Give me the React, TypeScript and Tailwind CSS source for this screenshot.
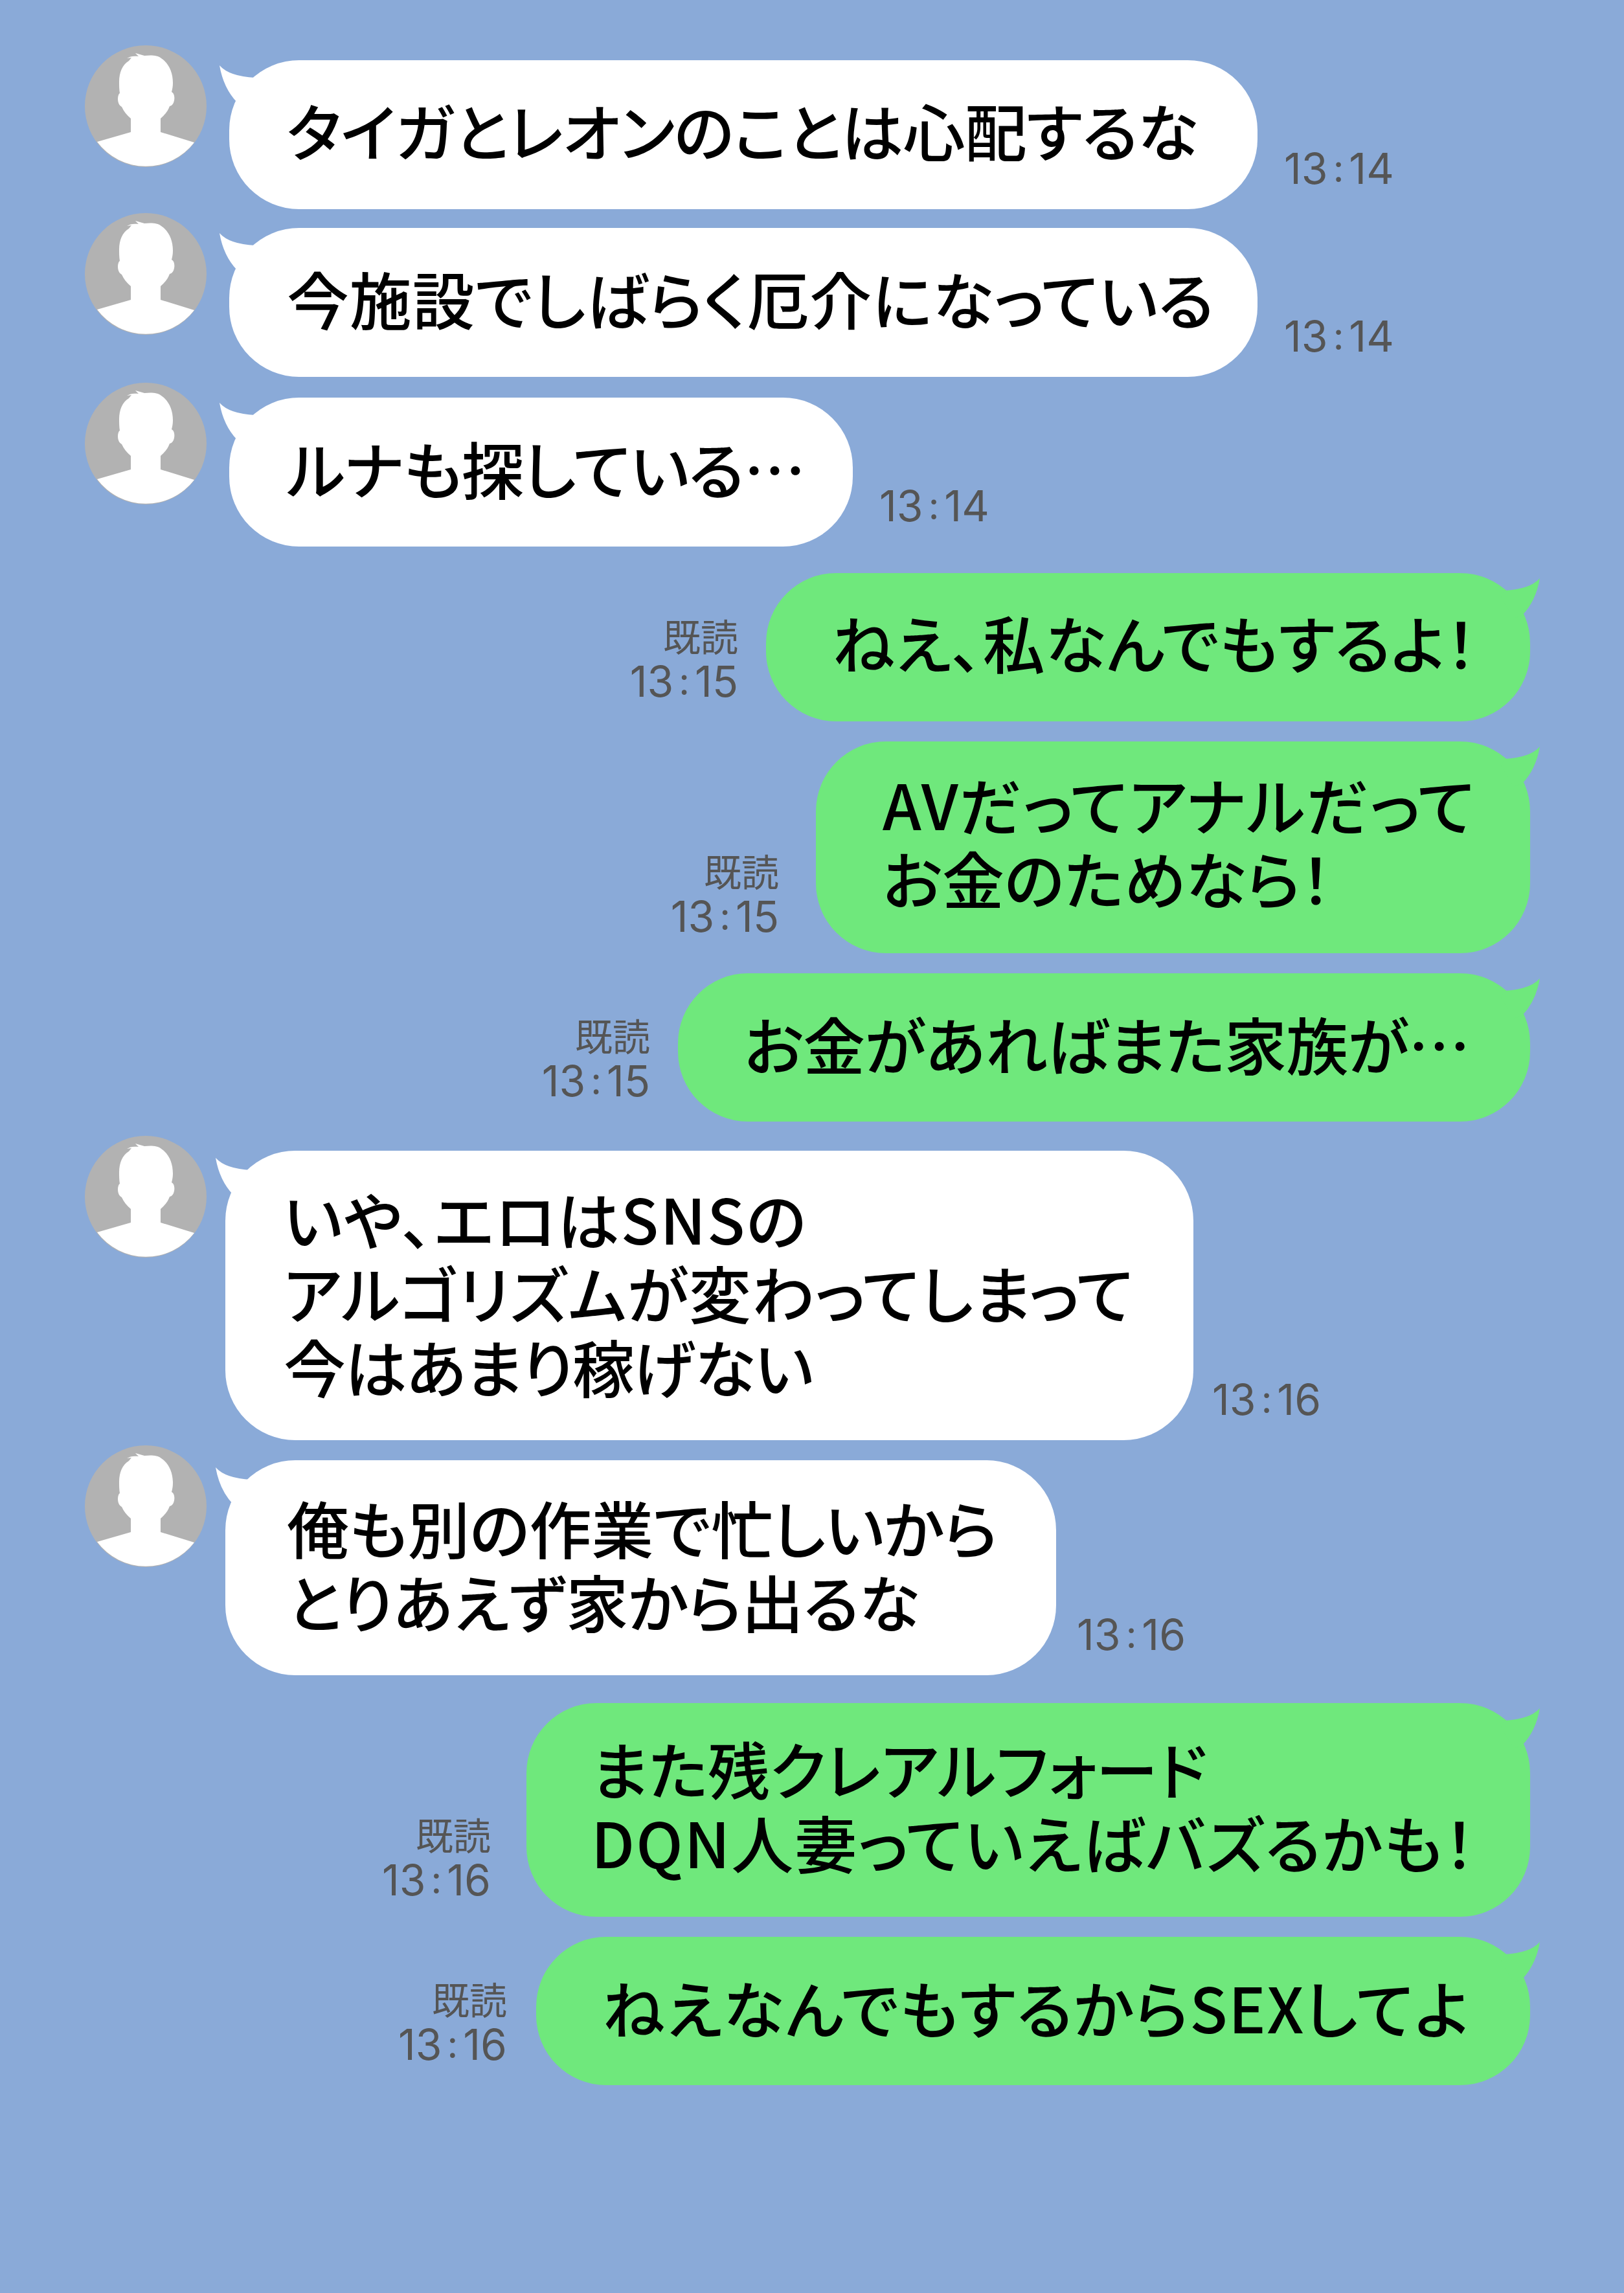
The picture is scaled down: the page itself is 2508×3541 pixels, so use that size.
type Line = { text: string; tracking: string };
type LeftMsg = {
  side: 'left';
  lines: Line[];
  time: string;
  row: string;
  bubble: string;
  avatarGap: string;
  tail: string;
  timeGap: string;
};
type RightMsg = {
  side: 'right';
  lines: Line[];
  time: string;
  row: string;
  bubble: string;
  meta: string;
};

const messages: (LeftMsg | RightMsg)[] = [
  { side: 'left', lines: [{ text: 'タイガとレオンのことは心配するな', tracking: 'tracking-[-0.7px]' }], time: '13:14', row: 'mt-0', bubble: 'w-[1588px] h-[230px] pl-[89px] pb-[16px]', avatarGap: 'mr-[35px]', tail: 'top-[8px]', timeGap: 'ml-[41px]' },
  { side: 'left', lines: [{ text: '今施設でしばらく厄介になっている', tracking: 'tracking-[0.85px]' }], time: '13:14', row: 'mt-[29px]', bubble: 'w-[1588px] h-[230px] pl-[89px] pb-[14px]', avatarGap: 'mr-[35px]', tail: 'top-[8px]', timeGap: 'ml-[41px]' },
  { side: 'left', lines: [{ text: 'ルナも探している…', tracking: 'tracking-[-0.75px]' }], time: '13:14', row: 'mt-[32px]', bubble: 'w-[963px] h-[230px] pl-[89px] pb-[14px]', avatarGap: 'mr-[35px]', tail: 'top-[8px]', timeGap: 'ml-[41px]' },
  { side: 'right', lines: [{ text: 'ねえ、私なんでもするよ！', tracking: 'tracking-[0.4px]' }], time: '13:15', row: 'mt-[41px]', bubble: 'w-[1180px] h-[229px] pl-[102px] pb-[18px]', meta: 'mr-[43px] mb-[23px]' },
  { side: 'right', lines: [{ text: 'AVだってアナルだって', tracking: 'tracking-[1.6px]' }, { text: 'お金のためなら！', tracking: 'tracking-[0px]' }], time: '13:15', row: 'mt-[31px]', bubble: 'w-[1103px] h-[327px] pl-[103px] pb-[22px]', meta: 'mr-[57px] mb-[18px]' },
  { side: 'right', lines: [{ text: 'お金があればまた家族が…', tracking: 'tracking-[-0.75px]' }], time: '13:15', row: 'mt-[31px]', bubble: 'w-[1316px] h-[229px] pl-[102px] pb-[14px]', meta: 'mr-[43px] mb-[24px]' },
  { side: 'left', lines: [{ text: 'いや、エロはSNSの', tracking: 'tracking-[2.2px]' }, { text: 'アルゴリズムが変わってしまって', tracking: 'tracking-[1.2px]' }, { text: '今はあまり稼げない', tracking: 'tracking-[-1.5px]' }], time: '13:16', row: 'mt-[45px]', bubble: 'w-[1495px] h-[447px] pl-[90px] pb-[12px]', avatarGap: 'mr-[29px]', tail: 'top-[11px]', timeGap: 'ml-[29px]' },
  { side: 'left', lines: [{ text: '俺も別の作業で忙しいから', tracking: 'tracking-[-0.2px]' }, { text: 'とりあえず家から出るな', tracking: 'tracking-[-0.4px]' }], time: '13:16', row: 'mt-[31px]', bubble: 'w-[1283px] h-[332px] pl-[95px] pb-[12px]', avatarGap: 'mr-[29px]', tail: 'top-[11px]', timeGap: 'ml-[32px]' },
  { side: 'right', lines: [{ text: 'また残クレアルフォード', tracking: 'tracking-[0px]' }, { text: 'DQN人妻っていえばバズるかも！', tracking: 'tracking-[2.1px]' }], time: '13:16', row: 'mt-[43px]', bubble: 'w-[1550px] h-[330px] pl-[100px] pb-[16px]', meta: 'mr-[55px] mb-[18px]' },
  { side: 'right', lines: [{ text: 'ねえなんでもするからSEXしてよ', tracking: 'tracking-[1.6px]' }], time: '13:16', row: 'mt-[31px]', bubble: 'w-[1535px] h-[229px] pl-[102px] pb-[14px]', meta: 'mr-[45px] mb-[24px]' },
];

function Avatar({ className }: { className: string }) {
  return (
    <svg className={className} viewBox="0 0 188 188" width="188" height="188">
      <circle cx="94" cy="94" r="94" fill="#b2b2b2" />
      <path
        fill="#fff"
        d="M78 12 L92 16 C102 15 112 15 118 20 C130 28 136 42 136 58 C136 64 135 68 134 72 C138 74 139 80 138 85 C137 90 135 93 131 94 C128 102 123 108 117 113 L117 134 L169 150 A94 94 0 0 1 19 149 L71 134 L71 113 C65 108 60 102 57 95 C53 93 51 88 51 83 C51 79 52 75 54 74 C53 68 53 62 53 56 C53 42 58 30 68 24 L72 19 L65 20 C70 17 75 16 83 17 Z"
      />
    </svg>
  );
}

function Tail({ color }: { color: string }) {
  return (
    <svg viewBox="0 0 60 62" width="60" height="62">
      <path fill={color} d="M0 0 Q15 17 55 19 L60 30 L40 62 L27 57 Q6 35 0 0 Z" />
    </svg>
  );
}

function Lines({ lines }: { lines: Line[] }) {
  return (
    <div className="text-[96px] font-medium leading-[114px] text-black whitespace-nowrap [font-feature-settings:'palt']">
      {lines.map((line) => (
        <div className={line.tracking} key={line.text}>
          {line.text}
        </div>
      ))}
    </div>
  );
}

// the colon sits a little apart from the digits, as in the app
function Time({ value, className }: { value: string; className?: string }) {
  const [h, min] = value.split(':');
  return (
    <div className={`font-['Inter',sans-serif] text-[66px] leading-[72px] text-[#555555] ${className ?? ''}`}>
      {h}
      <span className="relative -top-[3px] mx-[8px] text-[58px]">:</span>
      {min}
    </div>
  );
}

export default function App() {
  return (
    <div className="min-h-[3541px] bg-[#8aaad8] pt-[93px] font-['Noto_Sans_CJK_JP','Noto_Sans',sans-serif]">
      {messages.map((m) =>
        m.side === 'left' ? (
          <div className={`flex items-end pl-[131px] ${m.row}`} key={m.lines[0].text}>
            <Avatar className={`shrink-0 self-start -mt-[23px] ${m.avatarGap}`} />
            <div className={`relative flex items-center rounded-[108px] bg-white ${m.bubble}`}>
              <div className={`absolute -left-[15px] ${m.tail}`}>
                <Tail color="#ffffff" />
              </div>
              <div className="relative">
                <Lines lines={m.lines} />
              </div>
            </div>
            <Time className={`mb-[24px] ${m.timeGap}`} value={m.time} />
          </div>
        ) : (
          <div className={`flex items-end justify-end pr-[145px] ${m.row}`} key={m.lines[0].text}>
            <div className={`flex flex-col items-end ${m.meta}`}>
              <div className="text-[58px] leading-[70px] text-[#555555]">既読</div>
              <Time value={m.time} />
            </div>
            <div className={`relative flex items-center rounded-[108px] bg-[#6fe87c] ${m.bubble}`}>
              <div className="absolute -right-[15px] top-[8px] -scale-x-100">
                <Tail color="#6fe87c" />
              </div>
              <div className="relative">
                <Lines lines={m.lines} />
              </div>
            </div>
          </div>
        ),
      )}
    </div>
  );
}
